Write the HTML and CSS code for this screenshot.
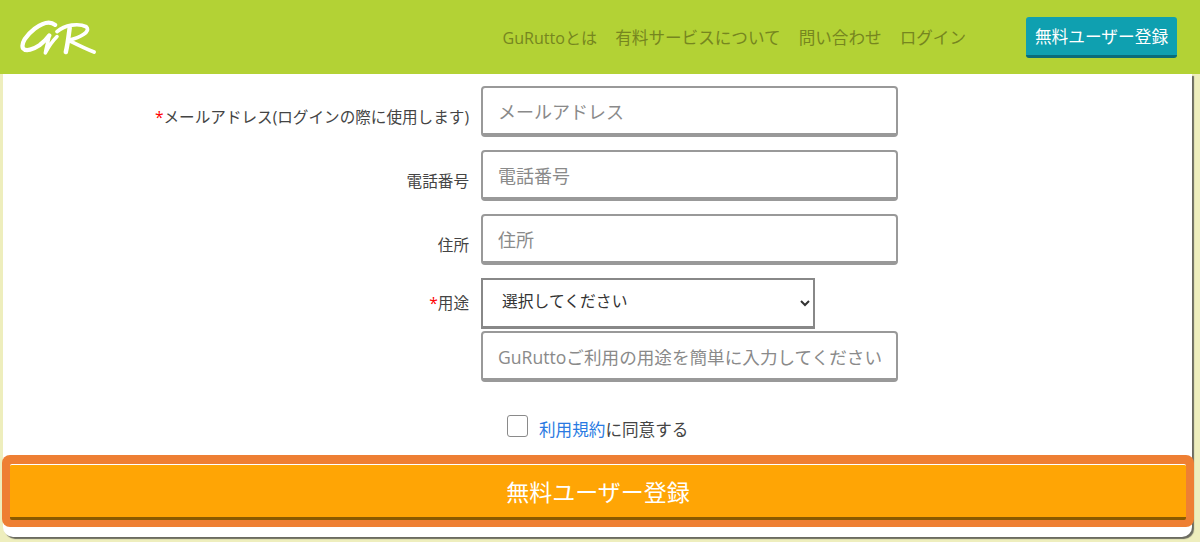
FILE: index.html
```html
<!DOCTYPE html>
<html lang="ja">
<head>
<meta charset="utf-8">
<title>GuRutto 無料ユーザー登録</title>
<link rel="stylesheet" href="styles.css">
</head>
<body>
<header class="header">
  <a class="logo" href="#" aria-label="GR">
    <svg width="76" height="41" viewBox="0 0 78 42" fill="none" stroke="#fff" stroke-linecap="round" stroke-linejoin="round">
      <path d="M36 9 C31 5 23 7 15 13 C6 20 1 28 3 33 C6 37 14 34 20 30 C24 27 27 24 30 20" stroke-width="4.4"/>
      <path d="M30 20 C29 26 27 32 26 38 C29 32 33 26 38 21" stroke-width="3.6"/>
      <path d="M51 12 C50 20 49 29 47 37" stroke-width="4.6"/>
      <path d="M38 16 C46 9 60 7 68 11 C73 16 62 22 50 25 C58 29 66 33 76 37" stroke-width="3.8"/>
    </svg>
  </a>
  <nav class="nav">
    <a class="nav-first" href="#">GuRuttoとは</a>
    <a href="#">有料サービスについて</a>
    <a href="#">問い合わせ</a>
    <a href="#">ログイン</a>
  </nav>
  <a class="signup" href="#">無料ユーザー登録</a>
</header>
<main class="card">
  <form class="form">
    <div class="row">
      <label class="label"><span class="req">*</span>メールアドレス(ログインの際に使用します)</label>
      <input class="field" type="text" placeholder="メールアドレス">
    </div>
    <div class="row">
      <label class="label">電話番号</label>
      <input class="field" type="text" placeholder="電話番号">
    </div>
    <div class="row">
      <label class="label">住所</label>
      <input class="field" type="text" placeholder="住所">
    </div>
    <div class="row row-select">
      <label class="label"><span class="req">*</span>用途</label>
      <select class="select"><option>選択してください</option></select>
    </div>
    <div class="row row-purpose">
      <span class="label"></span>
      <input class="field field-purpose" type="text" placeholder="GuRuttoご利用の用途を簡単に入力してください">
    </div>
    <div class="agree">
      <span class="checkbox"></span>
      <span class="agree-text"><a href="#">利用規約</a>に同意する</span>
    </div>
    <div class="submit-wrap">
      <button class="submit" type="button">無料ユーザー登録</button>
    </div>
  </form>
</main>
</body>
</html>
```
FILE: styles.css
```css
* { box-sizing: border-box; }
html, body { margin: 0; height: 542px; overflow: hidden; }
body {
  background: #eeeebd;
  font-family: "Open Sans", "Noto Sans CJK JP", sans-serif;
  color: #444;
}
a { text-decoration: none; }
.header {
  height: 74px;
  background: #b3d235;
  display: flex;
  align-items: center;
  padding: 0 23px 0 20px;
}
.logo { display: block; height: 41px; margin-top: -2px; }
.nav {
  margin-left: auto;
  display: flex;
  align-items: baseline;
  gap: 18px;
  font-size: 16.6px;
  margin-right: 60px;
  margin-top: -1px;
}
.nav a { color: #76861f; white-space: nowrap; }
.nav .nav-first { font-size: 16.1px; }
.signup {
  width: 151px;
  height: 41px;
  background: #0fa0b0;
  border-bottom: 3px solid #0a6c78;
  border-radius: 3px;
  color: #fff;
  font-size: 16.7px;
  display: flex;
  align-items: center;
  justify-content: center;
  white-space: nowrap;
}
.card {
  width: 1189px;
  height: 463px;
  margin-left: 3px;
  background: #fff;
  border-radius: 0 0 10px 10px;
  box-shadow: 2px 2px 1px #6b6b60;
  position: relative;
}
.form { padding-top: 12px; }
.row { display: flex; align-items: center; margin-bottom: 13px; }
.label {
  width: 466px;
  text-align: right;
  font-size: 15.6px;
  color: #444;
  padding-top: 9px;
  white-space: nowrap;
}
.req { color: #f00; }
.field {
  width: 417px;
  height: 51px;
  margin-left: 12px;
  padding: 2px 15px 0;
  border: 2px solid #999;
  border-bottom-width: 4px;
  border-radius: 4px;
  background: #fff;
  font: 18px "Open Sans", "Noto Sans CJK JP", sans-serif;
  outline: none;
}
.field-purpose { font-size: 17.6px; }
.field::placeholder { color: #8a8a8a; opacity: 1; }
.row-select { margin-bottom: 2px; }
.row-select .label { padding-top: 0; margin-top: -2px; }
.select {
  width: 334px;
  height: 51px;
  margin-left: 12px;
  padding: 0 16px 5px 15px;
  border: 2px solid #888;
  border-bottom-width: 3px;
  border-radius: 0;
  background: #fff;
  color: #333;
  font: 15.8px "Open Sans", "Noto Sans CJK JP", sans-serif;
  outline: none;
}
.row-purpose { margin-bottom: 33px; }
.agree {
  display: flex;
  align-items: center;
  padding-left: 504px;
  height: 22px;
  margin-bottom: 18px;
}
.checkbox {
  width: 21px;
  height: 22px;
  border: 1px solid #8a8a8a;
  border-radius: 3px;
  background: #fff;
}
.agree-text { margin-left: 11px; font-size: 16.6px; color: #444; padding-top: 5px; }
.agree-text a { color: #2a7ae2; }
.submit-wrap {
  width: 1192px;
  height: 72px;
  margin-left: -1px;
  padding: 9px 8px 7px;
  background: #ee7f33;
  border-radius: 8px;
}
.submit {
  display: block;
  width: 100%;
  height: 56px;
  border: 0;
  border-top: 1px solid #fff;
  border-bottom: 3px solid #8a5a00;
  border-radius: 2px;
  background: #ffa505;
  color: #fff;
  font: 23px "Open Sans", "Noto Sans CJK JP", sans-serif;
}
```
